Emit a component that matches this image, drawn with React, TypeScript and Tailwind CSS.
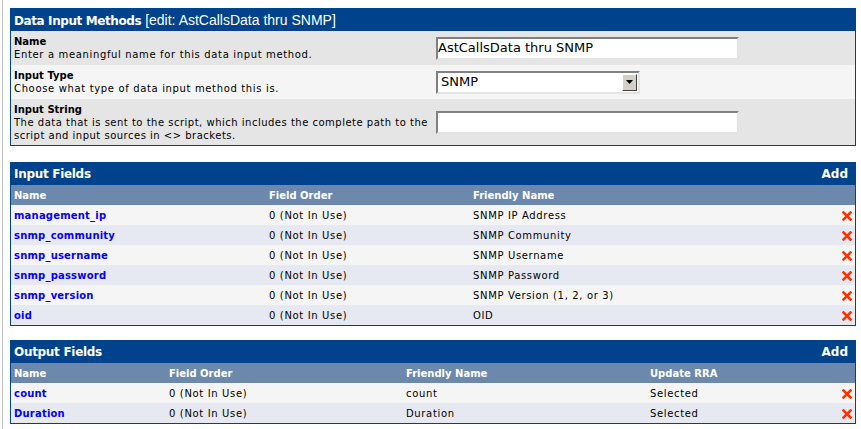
import React from "react";

const font = { fontFamily: '"DejaVu Sans", Verdana, sans-serif' };

function DeleteIcon() {
  return (
    <svg width="10" height="10" viewBox="0 0 10 10" className="inline-block">
      <path d="M1.5 1.5 L8.5 8.5 M8.5 1.5 L1.5 8.5" stroke="#ff3300" strokeWidth="2.6" strokeLinecap="square" />
    </svg>
  );
}

const inputFields = [
  ["management_ip", "0 (Not In Use)", "SNMP IP Address"],
  ["snmp_community", "0 (Not In Use)", "SNMP Community"],
  ["snmp_username", "0 (Not In Use)", "SNMP Username"],
  ["snmp_password", "0 (Not In Use)", "SNMP Password"],
  ["snmp_version", "0 (Not In Use)", "SNMP Version (1, 2, or 3)"],
  ["oid", "0 (Not In Use)", "OID"],
];

const outputFields = [
  ["count", "0 (Not In Use)", "count", "Selected"],
  ["Duration", "0 (Not In Use)", "Duration", "Selected"],
];

function PanelHeader({ title, add }: { title: React.ReactNode; add?: boolean }) {
  return (
    <div className="flex h-[22px] items-center justify-between bg-[#00438c] px-[3px] text-white">
      <div className="text-[12px] font-bold tracking-[-0.3px]">{title}</div>
      {add && <div className="pr-[4px] text-[12px] font-bold">Add</div>}
    </div>
  );
}

function TextBox({ value }: { value?: string }) {
  return (
    <div className="flex h-[23px] w-[303px] items-center border-2 border-t-[#808080] border-l-[#808080] border-r-[#e4e4e4] border-b-[#e4e4e4] bg-white text-[13px] text-black">
      {value}
    </div>
  );
}

function SelectBox() {
  return (
    <div className="flex h-[23px] w-[204px] items-center border-2 border-t-[#808080] border-l-[#808080] border-r-[#e4e4e4] border-b-[#e4e4e4] bg-white pl-[3px] pr-[1px] text-[13px] text-black">
      <span className="flex-1">SNMP</span>
      <span className="flex h-[17px] w-[15px] items-center justify-center border border-t-white border-l-white border-r-[#404040] border-b-[#404040] bg-[#d4d0c8]">
        <svg width="7" height="4" viewBox="0 0 7 4">
          <path d="M0 0 H7 L3.5 4 Z" fill="#000" />
        </svg>
      </span>
    </div>
  );
}

export default function App() {
  return (
    <div className="min-h-[429px] w-[861px] bg-white text-[10px] text-black" style={font}>
      <div className="ml-[2px] min-h-[429px] border-l border-[#c0c0c0] pl-[7px] pt-[8px]">
        <div className="w-[846px] border border-[#00438c]">
          <PanelHeader
            title={
              <span>
                <span className="text-[12px] font-bold tracking-[-0.4px]">Data Input Methods</span>{" "}
                <span
                  className="text-[14px] font-normal tracking-normal"
                  style={{ fontFamily: '"Liberation Sans", Arial, sans-serif' }}
                >
                  [edit: AstCallsData thru SNMP]
                </span>
              </span>
            }
          />
          <div className="flex h-[34px] items-center bg-[#e5e5e5]">
            <div className="w-[425px] pl-[3px] leading-[13px]">
              <div className="font-bold">Name</div>
              <div className="tracking-[0.65px]">Enter a meaningful name for this data input method.</div>
            </div>
            <TextBox value="AstCallsData thru SNMP" />
          </div>
          <div className="flex h-[34px] items-center bg-[#f5f5f5]">
            <div className="w-[425px] pl-[3px] leading-[13px]">
              <div className="font-bold">Input Type</div>
              <div className="tracking-[0.65px]">Choose what type of data input method this is.</div>
            </div>
            <SelectBox />
          </div>
          <div className="flex h-[46px] items-center bg-[#e5e5e5]">
            <div className="w-[425px] pl-[3px] leading-[13px]">
              <div className="font-bold">Input String</div>
              <div className="tracking-[0.5px]">
                The data that is sent to the script, which includes the complete path to the script and input sources in
                &lt;&gt; brackets.
              </div>
            </div>
            <TextBox />
          </div>
        </div>

        <div className="mt-[16px] w-[846px] border border-[#00438c]">
          <PanelHeader title="Input Fields" add />
          <table className="w-full table-fixed border-collapse">
            <colgroup>
              <col className="w-[255px]" />
              <col className="w-[204px]" />
              <col />
              <col className="w-[22px]" />
            </colgroup>
            <thead>
              <tr className="h-[20px] bg-[#6d88ad] text-left font-bold text-white">
                <th className="px-[3px]">Name</th>
                <th className="px-[3px]">Field Order</th>
                <th className="px-[3px]">Friendly Name</th>
                <th />
              </tr>
            </thead>
            <tbody>
              {inputFields.map((r, i) => (
                <tr key={r[0]} className={`h-[20px] ${i % 2 === 0 ? "bg-[#f5f5f5]" : "bg-[#e7e9f2]"}`}>
                  <td className="px-[3px] font-bold tracking-[0.2px] text-[#0000ff]">{r[0]}</td>
                  <td className="px-[3px] tracking-[0.65px]">{r[1]}</td>
                  <td className="px-[3px] tracking-[0.65px]">{r[2]}</td>
                  <td className="px-[3px] text-right">
                    <DeleteIcon />
                  </td>
                </tr>
              ))}
            </tbody>
          </table>
        </div>

        <div className="mt-[14px] w-[846px] border border-[#00438c]">
          <PanelHeader title="Output Fields" add />
          <table className="w-full table-fixed border-collapse">
            <colgroup>
              <col className="w-[155px]" />
              <col className="w-[237px]" />
              <col className="w-[244px]" />
              <col />
              <col className="w-[22px]" />
            </colgroup>
            <thead>
              <tr className="h-[20px] bg-[#6d88ad] text-left font-bold text-white">
                <th className="px-[3px]">Name</th>
                <th className="px-[3px]">Field Order</th>
                <th className="px-[3px]">Friendly Name</th>
                <th className="px-[3px]">Update RRA</th>
                <th />
              </tr>
            </thead>
            <tbody>
              {outputFields.map((r, i) => (
                <tr key={r[0]} className={`h-[20px] ${i % 2 === 0 ? "bg-[#f5f5f5]" : "bg-[#e7e9f2]"}`}>
                  <td className="px-[3px] font-bold tracking-[0.2px] text-[#0000ff]">{r[0]}</td>
                  <td className="px-[3px] tracking-[0.65px]">{r[1]}</td>
                  <td className="px-[3px] tracking-[0.65px]">{r[2]}</td>
                  <td className="px-[3px] tracking-[0.65px]">{r[3]}</td>
                  <td className="px-[3px] text-right">
                    <DeleteIcon />
                  </td>
                </tr>
              ))}
            </tbody>
          </table>
        </div>
      </div>
    </div>
  );
}
